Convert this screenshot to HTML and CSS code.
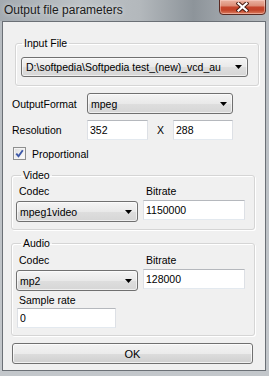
FILE: index.html
```html
<!DOCTYPE html>
<html lang="en">
<head>
  <meta charset="UTF-8" />
  <meta name="viewport" content="width=device-width, initial-scale=1.0"/>
  <title>Output file parameters</title>
  <link rel="stylesheet" href="styles.css">
</head>
<body>
  <div class="window">
    <div class="titlebar">
      <span class="title">Output file parameters</span>
      <div class="close-btn">
        <svg width="13" height="10" viewBox="0 0 13 10">
          <path d="M2.5 1.5 L10.5 8.5 M10.5 1.5 L2.5 8.5" stroke="#4a1d14" stroke-width="4.2" stroke-linecap="square"/>
          <path d="M2.5 1.5 L10.5 8.5 M10.5 1.5 L2.5 8.5" stroke="#ffffff" stroke-width="2.2" stroke-linecap="square"/>
        </svg>
      </div>
    </div>

    <div class="client">
      <fieldset class="group group-input">
        <legend>Input File</legend>
        <div class="combo combo-file">
          <span class="combo-text">D:\softpedia\Softpedia test_(new)_vcd_au</span>
          <svg class="arrow" width="7" height="4" viewBox="0 0 7 4"><path d="M0 0 H7 L3.5 4 Z" fill="#000"/></svg>
        </div>
      </fieldset>

      <div class="row row-format">
        <label class="row-label">OutputFormat</label>
        <div class="combo combo-format">
          <span class="combo-text">mpeg</span>
          <svg class="arrow" width="7" height="4" viewBox="0 0 7 4"><path d="M0 0 H7 L3.5 4 Z" fill="#000"/></svg>
        </div>
      </div>

      <div class="row row-res">
        <label class="row-label">Resolution</label>
        <input type="text" class="textbox res-w" value="352" />
        <span class="times">X</span>
        <input type="text" class="textbox res-h" value="288" />
      </div>

      <div class="row row-check">
        <span class="checkbox">
          <svg width="11" height="11" viewBox="0 0 11 11"><path d="M2.3 5.6 L4.5 8.3 L8.8 2.2" fill="none" stroke="#3d58a8" stroke-width="1.9"/></svg>
        </span>
        <span>Proportional</span>
      </div>

      <fieldset class="group group-av group-video">
        <legend>Video</legend>
        <div class="av-grid">
          <label class="field-label">Codec</label>
          <label class="field-label">Bitrate</label>
          <div class="combo combo-codec">
            <span class="combo-text">mpeg1video</span>
            <svg class="arrow" width="7" height="4" viewBox="0 0 7 4"><path d="M0 0 H7 L3.5 4 Z" fill="#000"/></svg>
          </div>
          <input type="text" class="textbox bitrate" value="1150000" />
        </div>
      </fieldset>

      <fieldset class="group group-av group-audio">
        <legend>Audio</legend>
        <div class="av-grid">
          <label class="field-label">Codec</label>
          <label class="field-label">Bitrate</label>
          <div class="combo combo-codec">
            <span class="combo-text">mp2</span>
            <svg class="arrow" width="7" height="4" viewBox="0 0 7 4"><path d="M0 0 H7 L3.5 4 Z" fill="#000"/></svg>
          </div>
          <input type="text" class="textbox bitrate" value="128000" />
        </div>
        <label class="field-label sample-label">Sample rate</label>
        <input type="text" class="textbox sample-rate" value="0" />
      </fieldset>

      <button class="ok-btn">OK</button>
    </div>
  </div>
</body>
</html>
```

FILE: styles.css
```css
body {
  margin: 0;
  font-family: "Liberation Sans", Arial, sans-serif;
  font-size: 10.5px;
  color: #000;
}
.window {
  width: 269px;
  height: 376px;
  box-sizing: border-box;
  padding: 0 3px 5px 2px;
  background:
    linear-gradient(180deg, rgba(0,0,0,0) 0, rgba(0,0,0,0) 21px, #b7bcc1 21px, #c3c7cb 100%),
    linear-gradient(90deg, #a3aab0 0%, #bdc2c6 30%, #b3b8bc 52%, #8d949a 72%, #a7acb1 88%, #b4b9bd 100%);
}
.titlebar {
  height: 21px;
  display: flex;
  justify-content: space-between;
  align-items: flex-start;
}
.title {
  font-size: 12px;
  line-height: 14px;
  margin: 3px 0 0 2px;
  color: #1b1b1b;
  text-shadow: 0 0 5px rgba(255,255,255,0.7);
}
.close-btn {
  width: 47px;
  height: 16px;
  box-sizing: border-box;
  margin-top: -1px;
  border: 1px solid #5a2a22;
  border-radius: 0 0 4px 4px;
  background: linear-gradient(180deg, #eab3a2 0%, #dd8e78 40%, #c5452c 52%, #c24328 72%, #dc7f62 100%);
  box-shadow: inset 0 0 0 1px rgba(255,220,210,0.45);
  display: flex;
  align-items: center;
  justify-content: center;
}
.client {
  height: 348px;
  border: 1px solid #6b7076;
  background: #f0f0f0;
}

/* group boxes */
.group {
  margin: 0;
  padding: 0;
  min-width: 0;
  border: 1px solid #d5d5d5;
  border-radius: 3px;
  box-shadow: inset 1px 1px 0 #fff, 1px 1px 0 #fff;
}
.group legend {
  padding: 0 2px;
  line-height: 13px;
}
.group-input {
  margin: 15px 6px 0 12px;
}
.group-input legend {
  margin-left: 6px;
}
.group-av {
  margin: 9px 10px 0 8px;
  padding: 3px 0 7px 4px;
}
.group-av legend {
  margin-left: 5px;
}
.group-audio {
  margin-top: 7px;
  padding-top: 4px;
}

/* combo boxes */
.combo {
  display: flex;
  align-items: center;
  box-sizing: border-box;
  height: 21px;
  padding: 0 5px 0 3px;
  border: 1px solid #707070;
  border-radius: 3px;
  background: linear-gradient(180deg, #f4f4f4 0%, #e9e9e9 50%, #dedede 51%, #d6d6d6 100%);
  box-shadow: inset 0 0 0 1px rgba(255,255,255,0.6);
}
.combo-text {
  flex: 1;
  overflow: hidden;
  white-space: nowrap;
}
.combo-file {
  width: 227px;
  height: 20px;
  margin: 7px 0 8px 5px;
  padding-left: 4px;
}
.combo-format {
  width: 146px;
}

/* text boxes */
.textbox {
  box-sizing: border-box;
  height: 20px;
  margin: 0;
  padding: 0 2px;
  font-family: inherit;
  font-size: 10.5px;
  color: #000;
  background: #fff;
  border: 1px solid;
  border-color: #b5b8bd #dde0e5 #e3e9ef #dde0e5;
  outline: none;
}

/* rows */
.row {
  display: flex;
  align-items: center;
  margin-left: 9px;
}
.row-label {
  width: 75px;
}
.row-format {
  margin-top: 7px;
}
.row-res {
  margin-top: 6px;
}
.res-w {
  width: 61px;
}
.times {
  width: 25px;
  text-align: center;
}
.res-h {
  width: 60px;
}
.row-check {
  margin: 7px 0 0 10px;
  height: 13px;
}
.checkbox {
  width: 13px;
  height: 13px;
  box-sizing: border-box;
  margin-right: 6px;
  border: 1px solid #8e8f8f;
  background: linear-gradient(135deg, #dcdcdc 0%, #f4f4f4 70%, #ffffff 100%);
  box-shadow: inset 0 0 0 1px #f4f4f4;
  display: flex;
  align-items: center;
  justify-content: center;
}

/* video / audio grid */
.av-grid {
  display: grid;
  grid-template-columns: 122px 102px;
  column-gap: 5px;
  align-items: start;
}
.field-label {
  display: block;
  padding-left: 3px;
  line-height: 13px;
}
.combo-codec {
  margin-top: 3px;
}
.bitrate {
  margin-top: 2px;
  width: 102px;
}
.sample-label {
  margin-top: 3px;
}
.sample-rate {
  display: block;
  margin: 1px 0 0 1px;
  width: 99px;
}

.ok-btn {
  display: block;
  width: 241px;
  height: 21px;
  margin: 7px 0 0 9px;
  padding: 0;
  font-family: inherit;
  font-size: 11px;
  color: #000;
  border: 1px solid #707070;
  border-radius: 3px;
  background: linear-gradient(180deg, #f3f3f3 0%, #ebebeb 50%, #dddddd 51%, #cfcfcf 100%);
  box-shadow: inset 0 0 0 1px rgba(255,255,255,0.7);
}
```
